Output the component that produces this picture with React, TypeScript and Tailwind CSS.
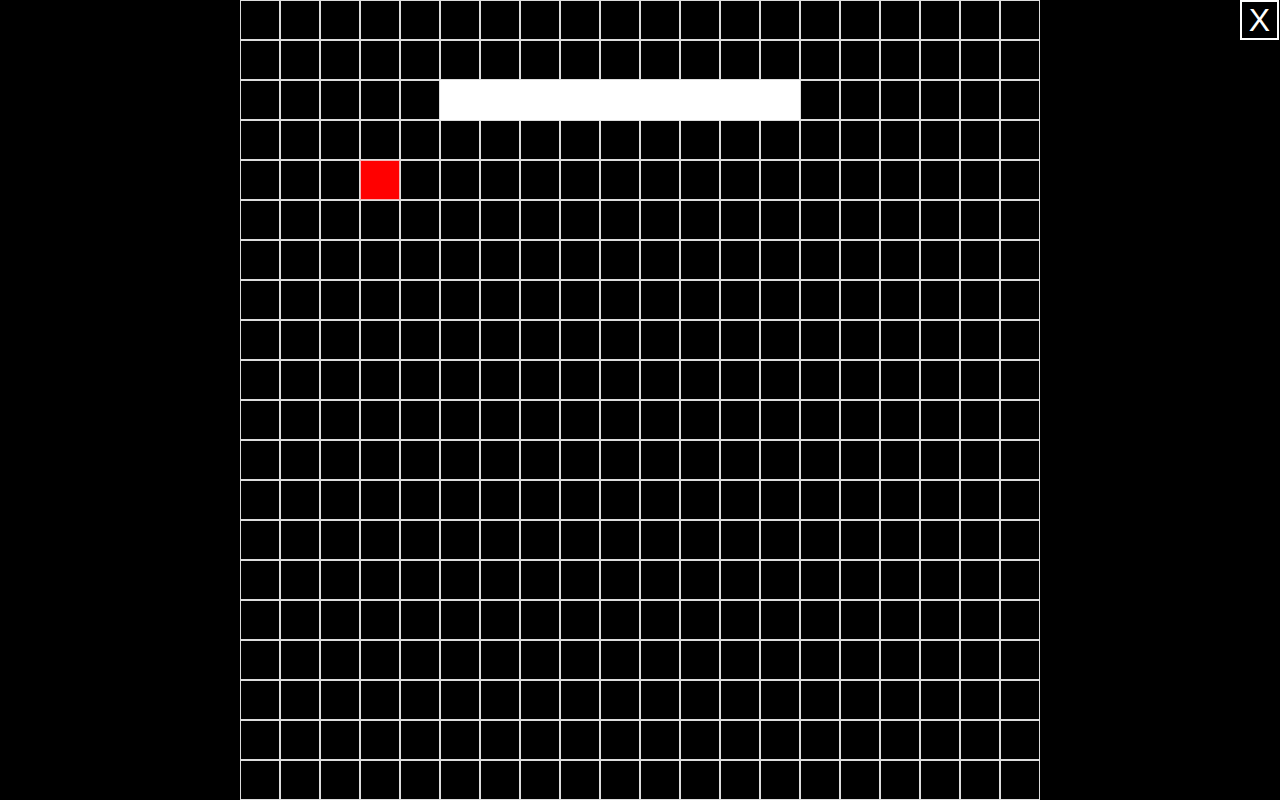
import React from 'react';

const SIZE = 20;
const snake = [5, 6, 7, 8, 9, 10, 11, 12, 13].map((c) => [2, c]);
const food = [4, 3];

export default function App() {
  const isSnake = (r: number, c: number) => snake.some(([sr, sc]) => sr === r && sc === c);

  return (
    <div className="relative w-full h-[800px] bg-black flex justify-center overflow-hidden" style={{ fontFamily: '"Liberation Sans", Arial, sans-serif' }}>
      <div className="grid grid-cols-[repeat(20,40px)] grid-rows-[repeat(20,40px)] w-[800px] h-[800px]">
        {Array.from({ length: SIZE * SIZE }).map((_, i) => {
          const r = Math.floor(i / SIZE);
          const c = i % SIZE;
          let cls = 'border border-[#dcdcdc] bg-black';
          if (isSnake(r, c)) cls = 'border border-white bg-white';
          else if (r === food[0] && c === food[1]) cls = 'border border-[#f4b4b4] bg-[#ff0000]';
          return <div key={i} className={cls} />;
        })}
      </div>
      <button className="absolute top-0 right-[1px] w-[39px] h-[40px] border-2 border-white bg-black text-white text-[32px] leading-none flex items-center justify-center">
        X
      </button>
    </div>
  );
}
